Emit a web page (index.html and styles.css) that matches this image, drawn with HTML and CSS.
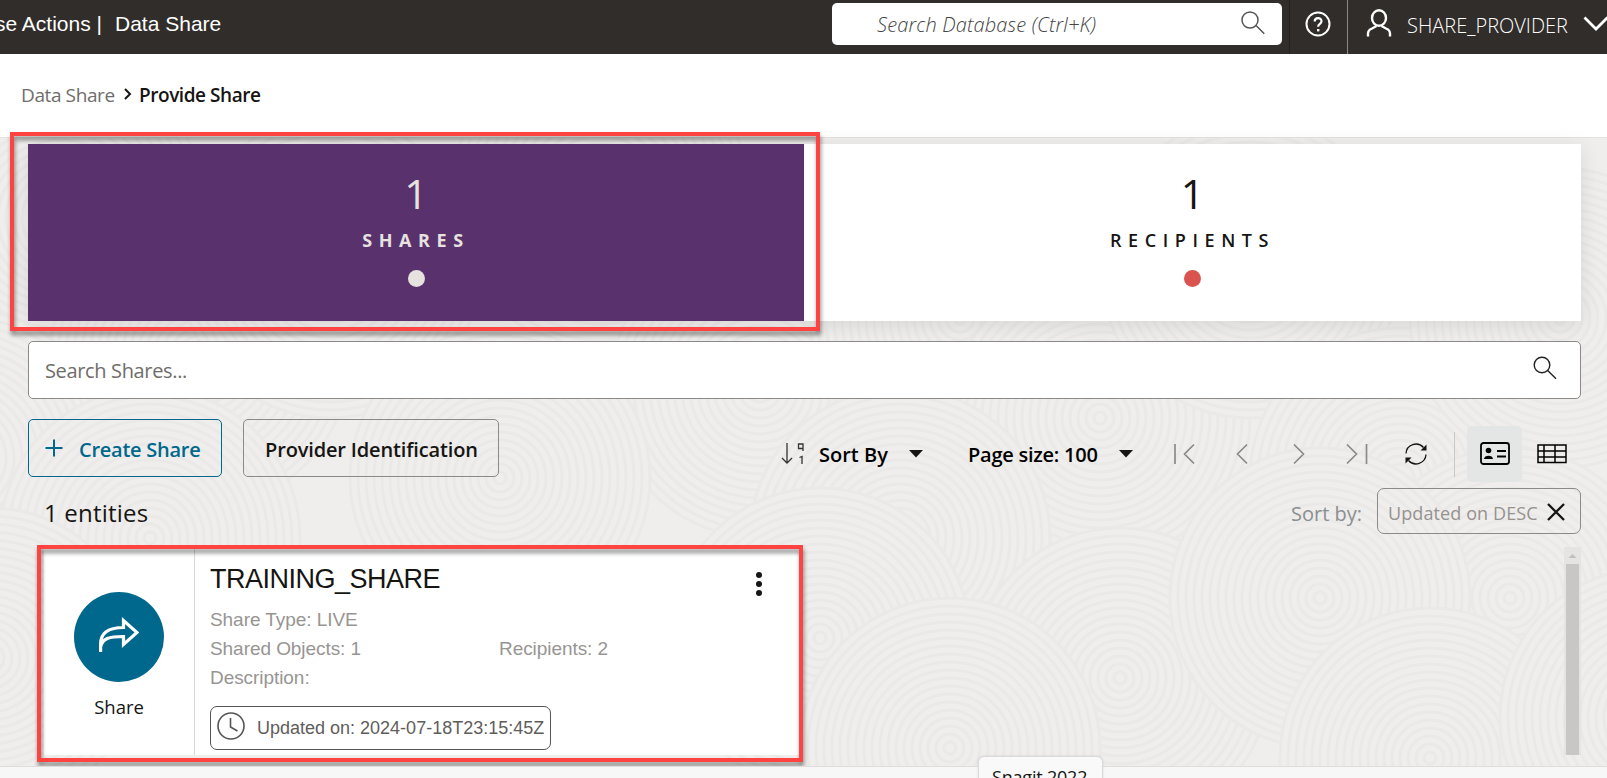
FILE: index.html
```html
<!DOCTYPE html>
<html lang="en">
<head>
<meta charset="utf-8">
<title>Data Share</title>
<link rel="stylesheet" href="styles.css">
</head>
<body>
<header class="topbar">
  <div class="brand"><span class="brand-app">se Actions |</span><span>Data Share</span></div>
  <div class="global-search">
    <span class="t gs-text">Search Database (Ctrl+K)</span>
    <svg class="gs-icon" width="24" height="24" viewBox="0 0 24 24" fill="none" stroke="#555" stroke-width="1.5"><circle cx="9" cy="9" r="8"/><path d="M15 14.500L23.300 22.700"/></svg>
  </div>
  <div class="help"><svg width="26" height="26" viewBox="0 0 26 26" fill="none" stroke="#fff" stroke-width="2"><circle cx="13" cy="13" r="11.500"/><path d="M9.700 10.500c0-4.500 6.800-4.300 6.800-.3 0 2.700-3.400 2.500-3.400 5.600" stroke-width="2.200"/><path d="M12 18h2.400v2.400H12z" fill="#fff" stroke="none"/></svg></div>
  <div class="user">
    <svg width="26" height="28" viewBox="0 0 26 28" fill="none" stroke="#fff" stroke-width="2.400"><ellipse cx="13" cy="9" rx="7" ry="7.700"/><path d="M2 27.500v-3c0-2.500 1.500-4 4-5l4.500-2.500M24 27.500v-3c0-2.500-1.500-4-4-5L15.500 17"/></svg>
    <span class="t user-name">SHARE_PROVIDER</span>
    <svg class="user-caret" width="27" height="16" viewBox="0 0 27 16" fill="none" stroke="#fff" stroke-width="2.800"><path d="M1.500 1.500L13 13L24.500 1.500"/></svg>
  </div>
</header>
<nav class="crumbs">
  <span class="t crumb-link">Data Share</span>
  <svg width="8" height="12" viewBox="0 0 8 12" fill="none" stroke="#161513" stroke-width="2"><path d="M1 1l5 5-5 5"/></svg>
  <span class="t crumb-here">Provide Share</span>
</nav>
<main class="page">
  <svg class="texture" width="1607" height="628" aria-hidden="true">
    <defs>
      <g id="rings" fill="none" stroke="#e9e8e6" stroke-width="3">
        <circle r="150" fill="#efeeec"/><circle r="142"/><circle r="134"/><circle r="126"/><circle r="118"/><circle r="110"/><circle r="102"/><circle r="94"/><circle r="86"/><circle r="78"/><circle r="70"/><circle r="62"/><circle r="54"/><circle r="46"/><circle r="38"/><circle r="30"/><circle r="22"/><circle r="14"/><circle r="6"/>
      </g>
    </defs>
    <use href="#rings" x="60" y="80"/><use href="#rings" x="200" y="220"/><use href="#rings" x="330" y="130"/><use href="#rings" x="600" y="60"/><use href="#rings" x="760" y="250"/><use href="#rings" x="960" y="180"/><use href="#rings" x="1100" y="280"/><use href="#rings" x="1250" y="130"/><use href="#rings" x="1400" y="340"/><use href="#rings" x="1560" y="180"/>
    <use href="#rings" x="-40" y="320"/><use href="#rings" x="500" y="340"/><use href="#rings" x="150" y="400"/><use href="#rings" x="-10" y="520"/><use href="#rings" x="900" y="400"/><use href="#rings" x="1510" y="460"/><use href="#rings" x="1120" y="540"/><use href="#rings" x="1320" y="460"/><use href="#rings" x="820" y="500"/><use href="#rings" x="1430" y="620"/><use href="#rings" x="950" y="610"/><use href="#rings" x="1650" y="580"/>
  </svg>
  <section class="tiles">
    <div class="tile tile-on"><span class="t tile-num">1</span><span class="t tile-label">SHARES</span><i class="dot"></i></div>
    <div class="tile"><span class="t tile-num">1</span><span class="t tile-label">RECIPIENTS</span><i class="dot"></i></div>
    <div class="mark mark-tile"></div>
  </section>
  <div class="search">
    <span class="t search-text">Search Shares...</span>
    <svg width="24" height="24" viewBox="0 0 24 24" fill="none" stroke="#222" stroke-width="1.400"><circle cx="9" cy="9" r="7.800"/><path d="M14.700 14.500L23 22.700"/></svg>
  </div>
  <div class="toolbar">
    <button class="btn btn-create"><svg width="18" height="18" viewBox="0 0 18 18" stroke="#00688c" stroke-width="2"><path d="M9 .5v17M.5 9h17"/></svg><span class="t create-text">Create Share</span></button>
    <button class="btn btn-ident"><span class="t ident-text">Provider Identification</span></button>
    <div class="tools">
      <svg class="i-sort" width="24" height="22" viewBox="0 0 24 22" fill="none" stroke="#333" stroke-width="1.300"><path d="M6 0v20M1 15l5 5 5-5M22 8V1h-4.500v4.500H22M18.500 14.500l2.500-1V21"/></svg>
      <span class="t sort-text">Sort By</span>
      <svg class="i-tri1" width="14" height="8" viewBox="0 0 14 8"><path d="M0 0h14L7 7.500z" fill="#161513"/></svg>
      <span class="t page-text">Page size: 100</span>
      <svg class="i-tri2" width="14" height="8" viewBox="0 0 14 8"><path d="M0 0h14L7 7.500z" fill="#161513"/></svg>
      <svg class="i-nav" width="196" height="22" viewBox="0 0 196 22" fill="none" stroke="#8b8a88" stroke-width="1.700"><path d="M2 1v20M21 1.500L11.500 11l9.500 9.500M74 1.500L64.500 11l9.500 9.500M121 1.500l9.500 9.500-9.500 9.500M174 1.500l9.500 9.500-9.500 9.500M193.500 1v20"/></svg>
      <svg class="i-refresh" width="24" height="24" viewBox="0 0 24 24" fill="none" stroke="#161513" stroke-width="1.300"><path d="M2 11.500A10 10 0 0 1 19.500 5.500M22 12.500A10 10 0 0 1 4.500 18.500"/><path d="M22.500 2.500v6h-6zM1.500 21.500v-6h6z" fill="#161513" stroke="none"/></svg>
      <div class="view"><svg width="30" height="23" viewBox="0 0 30 23" fill="none" stroke="#000" stroke-width="1.800"><rect x="1" y="1" width="28" height="21" rx="2.500"/><circle cx="8.500" cy="8.500" r="2.800" fill="#000" stroke="none"/><path d="M4 17c0-4.500 9-4.500 9 0z" fill="#000" stroke="none"/><path d="M17 9h9M17 14.500h9"/></svg></div>
      <svg class="i-table" width="30" height="20" viewBox="0 0 30 20" fill="none" stroke="#000" stroke-width="1.500"><rect x="1" y="1" width="28" height="17.500"/><path d="M1 7h28M1 13h28M7 1v17.500M18 1v17.500"/></svg>
    </div>
  </div>
  <div class="summary">
    <span class="t count">1 entities</span>
    <span class="t sortby">Sort by:</span>
    <div class="chip"><span class="t chip-text">Updated on DESC</span><svg width="18" height="18" viewBox="0 0 18 18" stroke="#161513" stroke-width="2.300"><path d="M1 1l16 16M17 1L1 17"/></svg></div>
  </div>
  <div class="list">
    <article class="card">
      <div class="card-side">
        <div class="disc"><svg width="40" height="36" viewBox="0 0 40 36" fill="none" stroke="#fff" stroke-width="3.200"><path d="M1.600 35V27C1.600 16 10 10.500 24.500 10.500V3.500L38 15.500L24.500 27.500V19.500C10 19.500 3.500 21.500 1.600 30"/></svg></div>
        <span class="t side-text">Share</span>
      </div>
      <div class="card-body">
        <h2 class="card-title">TRAINING_SHARE</h2>
        <div class="facts"><span>Share Type: LIVE</span><span></span><span>Shared Objects: 1</span><span>Recipients: 2</span><span>Description:</span></div>
        <div class="stamp"><svg width="28" height="28" viewBox="0 0 28 28" fill="none" stroke="#555" stroke-width="1.600"><circle cx="14" cy="14" r="13"/><path d="M13.500 6v9l7 4"/></svg><span>Updated on: 2024-07-18T23:15:45Z</span></div>
      </div>
      <svg class="kebab" width="8" height="26" viewBox="0 0 8 26" fill="#161513"><circle cx="4" cy="4" r="3"/><circle cx="4" cy="13" r="3"/><circle cx="4" cy="22" r="3"/></svg>
      <div class="mark mark-card"></div>
    </article>
    <div class="scroll"><svg width="17" height="17" viewBox="0 0 17 17"><path d="M4.500 11h8L8.500 7z" fill="#c2c0bf"/></svg><div class="thumb"></div></div>
  </div>
</main>
<footer class="foot"><div class="tip"><span class="t tip-text">Snagit 2022</span></div></footer>
</body>
</html>
```

FILE: styles.css
```css
* { box-sizing: border-box; }
body { margin: 0; width: 1607px; height: 778px; overflow: hidden; display: flex; flex-direction: column; background: #fff; color: #161513; font-family: "Open Sans", "Noto Sans", sans-serif; }
svg { display: block; flex: none; }
.t { white-space: nowrap; line-height: 1; flex: none; }

.topbar { height: 54px; flex: none; display: flex; background: #312d2a; color: #fff; }
.brand { width: 832px; display: flex; gap: 13px; padding-top: 12px; font: 21px/24px "Liberation Sans", Arial, sans-serif; white-space: nowrap; }
.brand-app { width: 102px; display: flex; justify-content: flex-end; }
.global-search { width: 450px; height: 42px; margin-top: 3px; padding: 0 17px 0 45px; background: #fff; border-radius: 5px; display: flex; align-items: center; justify-content: space-between; }
.gs-text { margin-top: 2px; font-size: 20px; font-style: italic; font-weight: 300; color: #444; letter-spacing: .15px; }
.gs-icon { margin-bottom: 3px; }
.help { width: 59px; margin-left: 7px; padding: 11px 0 0 15px; border-left: 1px solid #24211f; border-right: 1px solid #8c8986; }
.user { width: 259px; display: flex; align-items: flex-start; padding: 9px 0 0 18px; overflow: hidden; }
.user-name { width: 160px; margin: 7px 16px 0 15px; font-size: 20px; font-weight: 300; }
.user-caret { margin-top: 7px; }

.crumbs { height: 84px; flex: none; display: flex; align-items: center; padding: 0 0 1px 21px; border-bottom: 1px solid #e2e1df; font-size: 19px; }
.crumbs svg { margin: -3px 7px 0 9px; }
.crumb-link { width: 94px; color: #6f6d6a; letter-spacing: -.4px; }
.crumb-here { font-weight: 600; letter-spacing: -.45px; }

.page { position: relative; height: 628px; flex: none; background: #efeeec; padding: 6px 26px 0 28px; }
.texture { position: absolute; left: 0; top: 0; opacity: .75; }
.tiles { position: relative; display: flex; width: 1553px; height: 177px; background: #fff; box-shadow: 0 4px 20px rgba(0,0,0,.1); }
.tile { width: 777px; display: flex; flex-direction: column; align-items: center; padding-top: 26px; }
.tile-on { width: 776px; background: #59316d; color: #e6e2df; }
.tile-num { font-size: 41px; line-height: 46px; }
.tile-label { margin-top: 14px; font-size: 18px; line-height: 20px; font-weight: 600; letter-spacing: 6.600px; }
.tile-on .tile-label { font-weight: 700; }
.dot { width: 17px; height: 17px; margin-top: 20px; border-radius: 50%; background: #d9534f; }
.tile-on .dot { background: #e6e2df; }
.mark { position: absolute; border: 4px solid #fe4340; filter: drop-shadow(1px 4px 2px rgba(0,0,0,.45)); }
.mark-tile { left: -18px; top: -12px; width: 810px; height: 199px; }

.search { position: relative; width: 1553px; height: 58px; margin-top: 20px; padding: 0 22px 0 16px; border: 1px solid #8b8a88; border-radius: 5px; background: #fff; display: flex; align-items: center; justify-content: space-between; }
.search-text { margin-top: 2px; font-size: 20px; color: #6f6d6a; letter-spacing: -.35px; }
.search svg { margin: 0 1px 4px 0; }

.toolbar { position: relative; display: flex; height: 62px; margin-top: 20px; }
.btn { height: 58px; padding: 0; border: 1px solid #8b8a88; border-radius: 5px; background: none; display: flex; align-items: center; font: 600 20px "Open Sans", sans-serif; color: #161513; }
.btn-create { width: 194px; margin-right: 21px; padding-left: 16px; border-color: #00688c; color: #00688c; }
.create-text { margin: 3px 0 0 16px; letter-spacing: -.25px; }
.btn-ident { width: 256px; padding: 3px 0 0 21px; letter-spacing: -.15px; }
.tools { display: flex; align-items: center; margin-left: 282px; height: 69px; font-size: 20px; font-weight: 600; color: #000; }
.sort-text { width: 70px; margin: 3px 20px 0 14px; }
.page-text { width: 130px; margin: 3px 21px 0 45px; letter-spacing: -.25px; }
.i-nav { margin-left: 40px; }
.i-refresh { margin: 0 27px 0 35px; }
.view { display: flex; align-items: center; justify-content: center; width: 55px; height: 56px; margin: 0 15px 0 12px; border-radius: 5px; background: #e4e6e5; position: relative; }
.view::before { content: ""; position: absolute; left: -13px; top: 6px; width: 1px; height: 45px; background: #c9c8c6; }

.summary { position: relative; height: 66px; display: flex; }
.count { width: 1263px; padding: 20px 0 0 16px; font-size: 24px; letter-spacing: .2px; }
.sortby { width: 86px; margin-top: 23px; font-size: 20px; color: #8b8f91; }
.chip { width: 204px; height: 46px; margin-top: 7px; padding: 3px 15px 0 10px; border: 1px solid #8b8a88; border-radius: 7px; display: flex; align-items: center; justify-content: space-between; flex: none; }
.chip-text { font-size: 18px; color: #95928f; letter-spacing: .1px; }
.chip svg { margin-bottom: 2px; }

.list { position: relative; display: flex; justify-content: space-between; width: 1553px; height: 208px; }
.card { position: relative; width: 756px; height: 206px; margin: 2px 0 0 16px; background: #fff; display: flex; }
.card-side { width: 151px; border-right: 1px solid #d9d8d6; display: flex; flex-direction: column; align-items: center; padding-top: 43px; }
.disc { width: 90px; height: 90px; border-radius: 50%; background: #00688c; display: flex; align-items: center; justify-content: center; padding: 0 0 4px; }
.side-text { margin-top: 16px; font-size: 18.500px; }
.card-body { width: 500px; padding: 14px 0 0 15px; font-family: "Liberation Sans", Arial, sans-serif; }
.card-title { margin: 0; font-size: 27px; font-weight: 400; line-height: 32px; letter-spacing: -.5px; }
.facts { display: grid; grid-template-columns: 289px 200px; grid-auto-rows: 29px; margin-top: 10px; font-size: 19px; line-height: 29px; letter-spacing: -.06px; color: #979593; white-space: nowrap; }
.stamp { width: 341px; height: 44px; margin-top: 14px; padding-left: 6px; border: 1px solid #555; border-radius: 7px; display: flex; gap: 12px; font-size: 18px; line-height: 42px; color: #5f5d5b; white-space: nowrap; }
.stamp svg { margin-top: 5px; }
.kebab { margin: 22px 0 0 60px; }
.mark-card { left: -7px; top: -4px; width: 766px; height: 217px; }
.scroll { width: 17px; height: 208px; background: #e5e4e3; }
.thumb { width: 13px; height: 191px; margin: 0 2px; background: #c9c7c6; }

.foot { height: 12px; flex: none; background: #f7f7f7; border-top: 1px solid #dedddc; position: relative; }
.tip { position: absolute; left: 978px; top: -11px; width: 125px; height: 40px; border: 1px solid #dcdbda; border-radius: 6px; background: #f9f9f9; padding: 11px 0 0 13px; box-shadow: 0 0 2px rgba(0,0,0,.15); }
.tip-text { display: block; font-size: 18px; letter-spacing: -.2px; }
```
